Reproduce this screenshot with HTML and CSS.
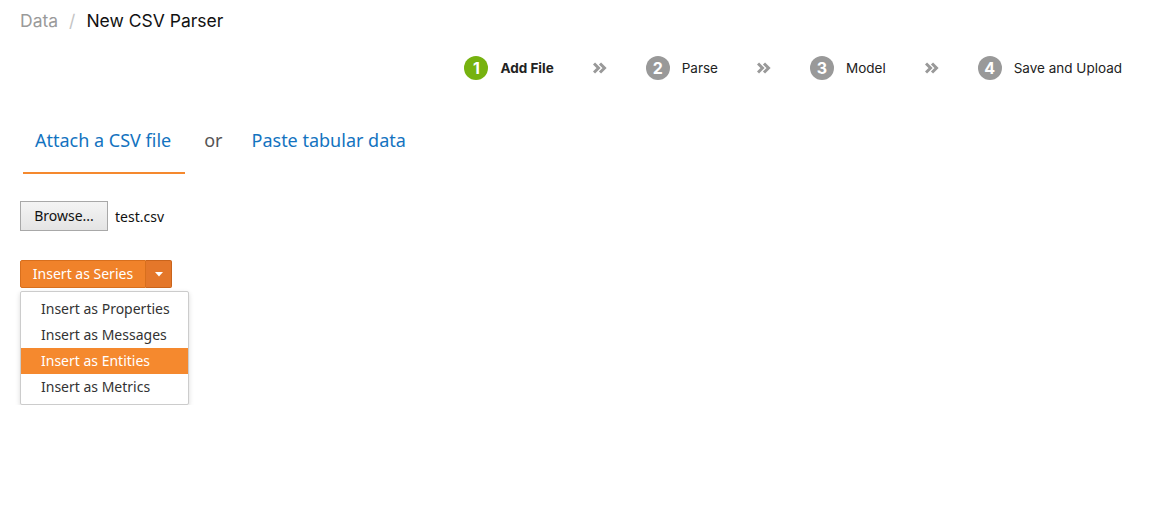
FILE: index.html
```html
<!DOCTYPE html>
<html>
<head>
<meta charset="utf-8">
<link rel="stylesheet" href="styles.css">
</head>
<body>
<div class="page">
  <div class="breadcrumb">
    <span class="crumb-parent">Data</span>
    <span class="crumb-sep">/</span>
    <span class="crumb-current">New CSV Parser</span>
  </div>

  <div class="steps">
    <div class="step active"><span class="step-num">1</span><span class="step-label">Add File</span></div>
    <span class="chev"><svg width="14" height="12" viewBox="0 0 14 12"><path d="M1 1.5 L5.5 6 L1 10.5 M7 1.5 L11.5 6 L7 10.5" fill="none" stroke="#999" stroke-width="3"/></svg></span>
    <div class="step"><span class="step-num">2</span><span class="step-label">Parse</span></div>
    <span class="chev"><svg width="14" height="12" viewBox="0 0 14 12"><path d="M1 1.5 L5.5 6 L1 10.5 M7 1.5 L11.5 6 L7 10.5" fill="none" stroke="#999" stroke-width="3"/></svg></span>
    <div class="step"><span class="step-num">3</span><span class="step-label">Model</span></div>
    <span class="chev"><svg width="14" height="12" viewBox="0 0 14 12"><path d="M1 1.5 L5.5 6 L1 10.5 M7 1.5 L11.5 6 L7 10.5" fill="none" stroke="#999" stroke-width="3"/></svg></span>
    <div class="step"><span class="step-num">4</span><span class="step-label">Save and Upload</span></div>
  </div>

  <div class="tabs">
    <a class="tab selected">Attach a CSV file</a>
    <span class="tab-or">or</span>
    <a class="tab">Paste tabular data</a>
  </div>

  <div class="file-row">
    <span class="browse">Browse...</span>
    <span class="file-name">test.csv</span>
  </div>

  <div class="split">
    <div class="split-buttons">
      <span class="btn-main">Insert as Series</span>
      <span class="btn-caret"><svg width="8" height="5" viewBox="0 0 8 5"><path d="M0 0 H8 L4 4.5 Z" fill="#fff"/></svg></span>
    </div>
    <ul class="menu">
      <li class="menu-item">Insert as Properties</li>
      <li class="menu-item">Insert as Messages</li>
      <li class="menu-item hover">Insert as Entities</li>
      <li class="menu-item">Insert as Metrics</li>
    </ul>
  </div>
</div>
</body>
</html>
```

FILE: styles.css
```css
* { box-sizing: border-box; }
html, body { margin: 0; padding: 0; background: #fff; }
body { font-family: "Noto Sans", "Open Sans", sans-serif; color: #222; }
.page { padding: 9px 45px 0 20px; }

.breadcrumb {
  font-family: Inter, "Liberation Sans", sans-serif;
  font-size: 17.5px;
  line-height: 24px;
  display: flex;
  gap: 11px;
}
.crumb-parent { color: #9a9a9a; }
.crumb-sep { color: #c4c4c4; }
.crumb-current { color: #111; }

.steps {
  display: flex;
  justify-content: flex-end;
  align-items: center;
  margin-top: 23px;
  height: 24px;
  font-family: Inter, "Liberation Sans", sans-serif;
  font-size: 13.5px;
}
.step { display: flex; align-items: center; gap: 12px; }
.step-num {
  width: 24px; height: 24px;
  border-radius: 50%;
  background: #999;
  color: #fff;
  font-weight: 700;
  font-size: 16px;
  display: flex; align-items: center; justify-content: center;
}
.step.active .step-num { background: #76b20f; }
.step-label { color: #222; }
.step.active .step-label { font-weight: 700; }
.chev { display: flex; align-items: center; margin: 0 39px; }

.tabs {
  display: flex;
  align-items: flex-start;
  margin-top: 48px;
  font-size: 18px;
  line-height: 24px;
}
.tab {
  color: #1373c0;
}
.tab.selected {
  padding: 0 14px 20px 12px;
  margin-left: 3px;
  border-bottom: 2px solid #f5892e;
}
.tab-or { color: #555; padding: 0 29px 0 19px; }

.file-row {
  display: flex;
  align-items: center;
  gap: 7px;
  margin-top: 27px;
  font-size: 14px;
}
.browse {
  display: inline-block;
  width: 88px; height: 30px;
  line-height: 28px;
  text-align: center;
  border: 1px solid #a8a8a8;
  background: linear-gradient(#f4f4f4, #e4e4e4);
  color: #111;
}
.file-name { color: #111; }

.split { margin-top: 29px; }
.split-buttons { display: flex; height: 28px; }
.btn-main {
  width: 126px;
  background: #f0822a;
  border: 1px solid #d86f1d;
  border-radius: 2px 0 0 2px;
  color: #fff;
  font-size: 14px;
  line-height: 26px;
  text-align: center;
}
.btn-caret {
  width: 26px;
  background: #e4772a;
  border: 1px solid #c9641c;
  border-left: none;
  border-radius: 0 2px 2px 0;
  display: flex; align-items: center; justify-content: center;
}
.menu {
  list-style: none;
  margin: 3px 0 0 0;
  padding: 4px 0;
  width: 169px;
  border: 1px solid #ccc;
  border-radius: 2px;
  box-shadow: 0 2px 5px rgba(0,0,0,0.15);
  background: #fff;
}
.menu-item {
  height: 26px;
  line-height: 26px;
  padding-left: 20px;
  font-size: 14px;
  color: #333;
}
.menu-item.hover { background: #f5892e; color: #fff; }
```
